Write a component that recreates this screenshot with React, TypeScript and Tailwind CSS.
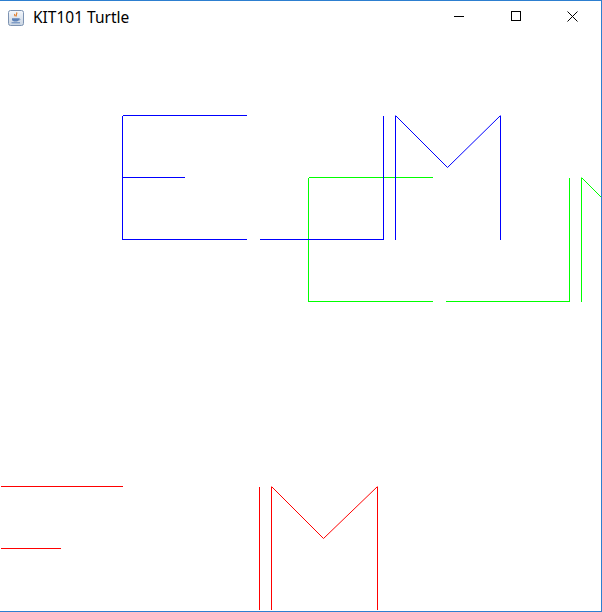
import React from "react"

type Seg = [number, number, number, number]

// turtle trails, in window pixel coordinates (x, y of pixel centres)
const red: Seg[] = [
  [0, 486, 122, 486],
  [0, 548, 60, 548],
  [259, 486, 259, 609],
  [271, 486, 271, 609],
  [377, 486, 377, 609],
]
const green: Seg[] = [
  [308, 177, 308, 301],
  [308, 177, 432, 177],
  [308, 239, 370, 239],
  [308, 301, 432, 301],
  [445, 301, 569, 301],
  [569, 177, 569, 301],
  [581, 177, 581, 301],
]
const blue: Seg[] = [
  [122, 115, 122, 239],
  [122, 115, 246, 115],
  [122, 177, 184, 177],
  [122, 239, 246, 239],
  [259, 239, 383, 239],
  [383, 115, 383, 239],
  [395, 115, 395, 239],
  [500, 115, 500, 239],
]

function Lines({ segs, color }: { segs: Seg[]; color: string }) {
  return (
    <g stroke={color} strokeWidth={1} shapeRendering="crispEdges">
      {segs.map(([x1, y1, x2, y2], i) => (
        <line key={i} x1={x1 + 0.5} y1={y1 + 0.5} x2={x2 + 0.5} y2={y2 + 0.5} />
      ))}
    </g>
  )
}

function JavaIcon() {
  return (
    <svg width="16" height="16" viewBox="0 0 16 16">
      <defs>
        <linearGradient id="jg" x1="0" y1="0" x2="0" y2="1">
          <stop offset="0" stopColor="#f4f7fb" />
          <stop offset="1" stopColor="#c9d4e2" />
        </linearGradient>
      </defs>
      <rect x="0.5" y="0.5" width="15" height="15" rx="2" fill="url(#jg)" stroke="#7d93b2" />
      <path d="M8.5 2.5c1.5 1.2-1.5 2.2 0 3.8M6.8 4c-0.8 1 0.6 1.6 0 2.4" stroke="#e0761f" strokeWidth="1.1" fill="none" />
      <path d="M4 8.2h7v1.2c0 1.4-1.6 2.2-3.5 2.2S4 10.8 4 9.4z" fill="#5d82b8" />
      <path d="M11 8.6c1.3 0 1.3 1.5 0 1.5" stroke="#5d82b8" strokeWidth="0.8" fill="none" />
      <path d="M3.5 12.8h8.5" stroke="#5d82b8" strokeWidth="1" />
    </svg>
  )
}

export default function App() {
  return (
    <div className="w-[602px] h-[612px] flex flex-col bg-white border-t border-r border-b border-[#2d7fd0]">
      <div className="h-[30px] flex items-center shrink-0">
        <div className="pl-2 pt-[3px] flex items-center">
          <JavaIcon />
        </div>
        <span className="ml-[9px] text-[15.5px] text-black leading-none pt-[3px] font-['Noto_Sans',sans-serif]">
          KIT101 Turtle
        </span>
        <div className="ml-auto flex h-full">
          <div className="w-[57px] flex items-center justify-center">
            <div className="w-[10px] h-px bg-black" />
          </div>
          <div className="w-[57px] flex items-center justify-center">
            <div className="w-[10px] h-[10px] border border-black" />
          </div>
          <div className="w-[57px] flex items-center justify-center">
            <svg width="11" height="11" viewBox="0 0 11 11">
              <path d="M0.5 0.5L10.5 10.5M10.5 0.5L0.5 10.5" stroke="#000" strokeWidth="1" />
            </svg>
          </div>
        </div>
      </div>
      <div className="flex-1 overflow-hidden">
        <svg width="601" height="580" viewBox="0 31 601 580" className="block">
          <Lines segs={red} color="#ff0000" />
          <polyline points="271.5,486.5 323.5,538.5 377.5,486.5" stroke="#ff0000" strokeWidth="1" fill="none" />
          <Lines segs={green} color="#00ff00" />
          <polyline points="581.5,177.5 640.5,236.5" stroke="#00ff00" strokeWidth="1" fill="none" />
          <Lines segs={blue} color="#0000ff" />
          <polyline points="395.5,115.5 447.5,167.5 500.5,115.5" stroke="#0000ff" strokeWidth="1" fill="none" />
        </svg>
      </div>
    </div>
  )
}
